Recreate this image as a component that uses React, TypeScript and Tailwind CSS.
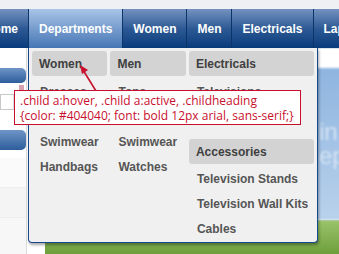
import React from "react";

const tabs = ["Departments", "Women", "Men", "Electricals", "Laptops"];

const columns = [
  {
    heading: "Women",
    width: "w-[76px]",
    items: ["Dresses", "Skirts", "Swimwear", "Handbags"],
  },
  {
    heading: "Men",
    width: "w-[76px]",
    items: ["Tops", "Shirts", "Swimwear", "Watches"],
  },
];

function Item({ label }: { label: string }) {
  return (
    <div className="flex h-[25px] items-center pl-[8px] text-[12px] font-bold text-[#555]">
      {label}
    </div>
  );
}

function Heading({ label }: { label: string }) {
  return (
    <div className="flex h-[25px] items-center rounded-[3px] bg-[#d3d3d3] pl-[7px] text-[12px] font-bold text-[#404040]">
      {label}
    </div>
  );
}

export default function App() {
  return (
    <div className="relative h-[254px] w-[339px] overflow-hidden bg-white font-['Liberation_Sans',Arial,sans-serif]">
      <div className="h-[9px] bg-[#eef0f3]" />

      <nav className="flex h-[39px] bg-gradient-to-b from-[#7592bf] via-[#2d5a95] to-[#073b7b] text-[12px] font-bold text-white">
        <div className="flex w-[28px] shrink-0 items-center justify-end overflow-hidden pr-[10px]">
          <span className="whitespace-nowrap">Home</span>
        </div>
        {tabs.map((t, i) => (
          <div
            key={t}
            className={`flex shrink-0 items-center whitespace-nowrap border-l border-[#0b3468] px-[10px] ${
              i === 0 ? "bg-gradient-to-b from-[#a9c4e6] to-[#4676b5]" : ""
            }`}
          >
            {t}
          </div>
        ))}
      </nav>

      {/* page behind the menu */}
      <div className="flex h-[206px]">
        <aside className="flex w-[27px] shrink-0 flex-col border-r border-[#dcdcdc] bg-white">
          <div className="h-[20px]" />
          <div className="h-[15px] rounded-r-[5px] bg-gradient-to-b from-[#6f95c6] to-[#2c5d9c]" />
          <div className="mt-[2px] flex h-[7px] justify-end pr-[2px]">
            <div className="h-[6px] w-[5px] bg-[#d9a0b0]" />
          </div>
          <div className="mt-[2px] flex h-[16px] border border-[#c8c8c8] bg-white">
            <div className="ml-auto flex w-[12px] items-center justify-center bg-[#dcdcdc]">
              <div className="h-0 w-0 border-x-[3px] border-t-[3px] border-x-transparent border-t-[#333]" />
            </div>
          </div>
          <div className="mt-[20px] h-[20px] rounded-r-[5px] bg-gradient-to-b from-[#6f95c6] to-[#2c5d9c]" />
          <div className="mt-[8px] h-[30px] border-b border-[#eee] bg-[#fafafa]" />
          <div className="h-[30px] border-b border-[#eee] bg-[#f4f4f4]" />
          <div className="flex-1 bg-[#f7f7f7]" />
        </aside>
        <div className="flex w-[18px] shrink-0 flex-col bg-white" />
        <main className="flex flex-1 flex-col">
          <div className="h-[20px] border-t border-[#dde3ea] bg-white" />
          <div className="flex h-[152px] flex-col justify-center bg-gradient-to-b from-[#8fb5e0] via-[#a4c3e6] to-[#b9d2ec] pl-[274px] text-[24px] leading-[24px] text-[#d3e3f4] blur-[0.8px]">
            <span>in</span>
            <span>ep</span>
          </div>
          <div className="flex-1 bg-gradient-to-b from-[#9cc46a] to-[#6e9f3c]" />
        </main>
      </div>

      {/* dropdown panel */}
      <div className="absolute left-[28px] top-[48px] flex h-[195px] w-[290px] gap-[3px] rounded-b-[4px] border border-t-0 border-[#174a8c] bg-[#f0f0f0] px-[3px] pt-[3px] shadow-[1px_2px_3px_rgba(0,0,0,0.35)]">
        {columns.map((c) => (
          <div key={c.heading} className={`${c.width} flex flex-col`}>
            <Heading label={c.heading} />
            <div className="mt-[3px]">
              {c.items.map((it) => (
                <Item key={it} label={it} />
              ))}
            </div>
          </div>
        ))}
        <div className="flex w-[126px] flex-col">
          <Heading label="Electricals" />
          <div className="mt-[3px]">
            <Item label="Televisions" />
            <Item label="Projectors" />
          </div>
          <div className="mt-[10px]">
            <Heading label="Accessories" />
          </div>
          <div className="mt-[2px]">
            <Item label="Television Stands" />
            <Item label="Television Wall Kits" />
            <Item label="Cables" />
          </div>
        </div>
      </div>

      {/* arrow */}
      <svg className="absolute left-0 top-0" width="339" height="254" viewBox="0 0 339 254">
        <line x1="96" y1="91" x2="83" y2="70" stroke="#c8102e" strokeWidth="1.6" />
        <polygon points="80,65 88,70 82,74" fill="#c8102e" />
      </svg>

      {/* annotation */}
      <div className="absolute left-[14px] top-[90px] flex h-[35px] w-[287px] flex-col justify-center border-[1.5px] border-[#c8102e] bg-white pl-[5px] font-['Open_Sans',sans-serif] text-[12px] leading-[15px] text-[#c8102e]">
        <span className="whitespace-nowrap">.child a:hover, .child a:active, .childheading</span>
        <span className="whitespace-nowrap">{"{color: #404040; font: bold 12px arial, sans-serif;}"}</span>
      </div>
    </div>
  );
}
